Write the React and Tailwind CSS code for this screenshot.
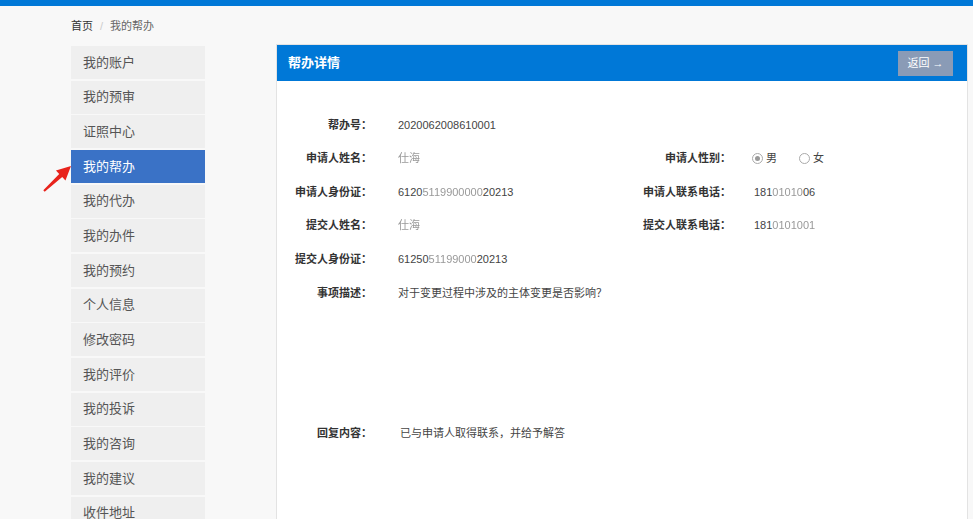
import React from "react";

const menu = ["我的账户","我的预审","证照中心","我的帮办","我的代办","我的办件","我的预约","个人信息","修改密码","我的评价","我的投诉","我的咨询","我的建议","收件地址"];

function Blur({ children }) {
  return <span className="text-[#999] blur-[0.5px]">{children}</span>;
}

function Label({ children, w }) {
  return <div className={`${w} shrink-0 text-right font-bold text-[#333]`}>{children}</div>;
}

function Row({ left, leftVal, right, rightVal, h = "h-[33.5px]", align = "items-center" }) {
  return (
    <div className={`flex ${align} ${h}`}>
      <div className="flex w-[343px] shrink-0">
        <Label w="w-[95px]">{left}</Label>
        <div className="pl-[26px] text-[#444]">{leftVal}</div>
      </div>
      {right && (
        <div className="flex">
          <Label w="w-[111px]">{right}</Label>
          <div className="pl-[23px] text-[#444]">{rightVal}</div>
        </div>
      )}
    </div>
  );
}

function Radio({ checked, label }) {
  return (
    <span className="inline-flex items-center gap-[3px]">
      <span className="w-[11px] h-[11px] rounded-full border border-[#aaa] bg-white flex items-center justify-center">
        {checked && <span className="w-[5px] h-[5px] rounded-full bg-[#999]" />}
      </span>
      <span className="text-[#444]">{label}</span>
    </span>
  );
}

export default function App() {
  return (
    <div className="relative min-h-screen bg-[#f8f8f8]" style={{ fontFamily: '"Liberation Sans", "Noto Sans CJK SC", sans-serif' }}>
      <div className="h-[6px] bg-[#0078d7]" />
      <div className="pl-[71px] pt-[9px] text-[11px] leading-[22px] h-[38px]">
        <span className="text-[#333]">首页</span>
        <span className="text-[#ccc] mx-[7px]">/</span>
        <span className="text-[#666]">我的帮办</span>
      </div>
      <div className="flex items-start pl-[71px]">
        <div className="w-[134px] mt-[2px] flex flex-col gap-[1.67px] shrink-0">
          {menu.map((m) => (
            <div
              key={m}
              className={`h-[33px] flex items-center pl-[12px] text-[13px] ${m === "我的帮办" ? "bg-[#3a72c6] text-white" : "bg-[#efefef] text-[#555]"}`}
            >
              {m}
            </div>
          ))}
        </div>
        <div className="ml-[71px] w-[692px] min-h-[520px] border border-[#e3e3e3] bg-white">
          <div className="h-[36px] bg-[#0078d7] flex items-center justify-between pl-[11px] pr-[14px]">
            <div className="text-white font-bold text-[13px]">帮办详情</div>
            <div className="w-[55px] h-[25px] bg-[#8a9bb6] text-white text-[11px] flex items-center justify-center">返回 →</div>
          </div>
          <div className="pt-[27px] text-[11px] leading-[14px]">
            <Row left="帮办号：" leftVal="2020062008610001" />
            <Row
              left="申请人姓名："
              leftVal={<Blur>仕海</Blur>}
              right="申请人性别："
              rightVal={
                <span className="flex items-center gap-[22px] -ml-[2px]">
                  <Radio checked label="男" />
                  <Radio label="女" />
                </span>
              }
            />
            <Row
              left="申请人身份证："
              leftVal={<span>6120<Blur>5119900000</Blur>20213</span>}
              right="申请人联系电话："
              rightVal={<span>181<Blur>01010</Blur>06</span>}
            />
            <Row
              left="提交人姓名："
              leftVal={<Blur>仕海</Blur>}
              right="提交人联系电话："
              rightVal={<span>181<Blur>0101001</Blur></span>}
            />
            <Row left="提交人身份证：" leftVal={<span>61250<Blur>51199000</Blur>20213</span>} />
            <div className="flex h-[141px] pt-[10px]">
              <Label w="w-[95px]">事项描述：</Label>
              <div className="pl-[26px] text-[#444]">对于变更过程中涉及的主体变更是否影响？</div>
            </div>
            <div className="flex h-[33.5px] items-center">
              <Label w="w-[95px]">回复内容：</Label>
              <div className="pl-[28px] text-[#444]">已与申请人取得联系，并给予解答</div>
            </div>
          </div>
        </div>
      </div>
      <svg className="absolute left-[40px] top-[162px]" width="34" height="32" viewBox="0 0 34 32">
        <polygon points="31,4 25.45,18.6 22.2,15.1 4.7,29.7 3.3,28.3 19.2,11.9 15.95,8.4" fill="#e8231c" />
      </svg>
    </div>
  );
}
